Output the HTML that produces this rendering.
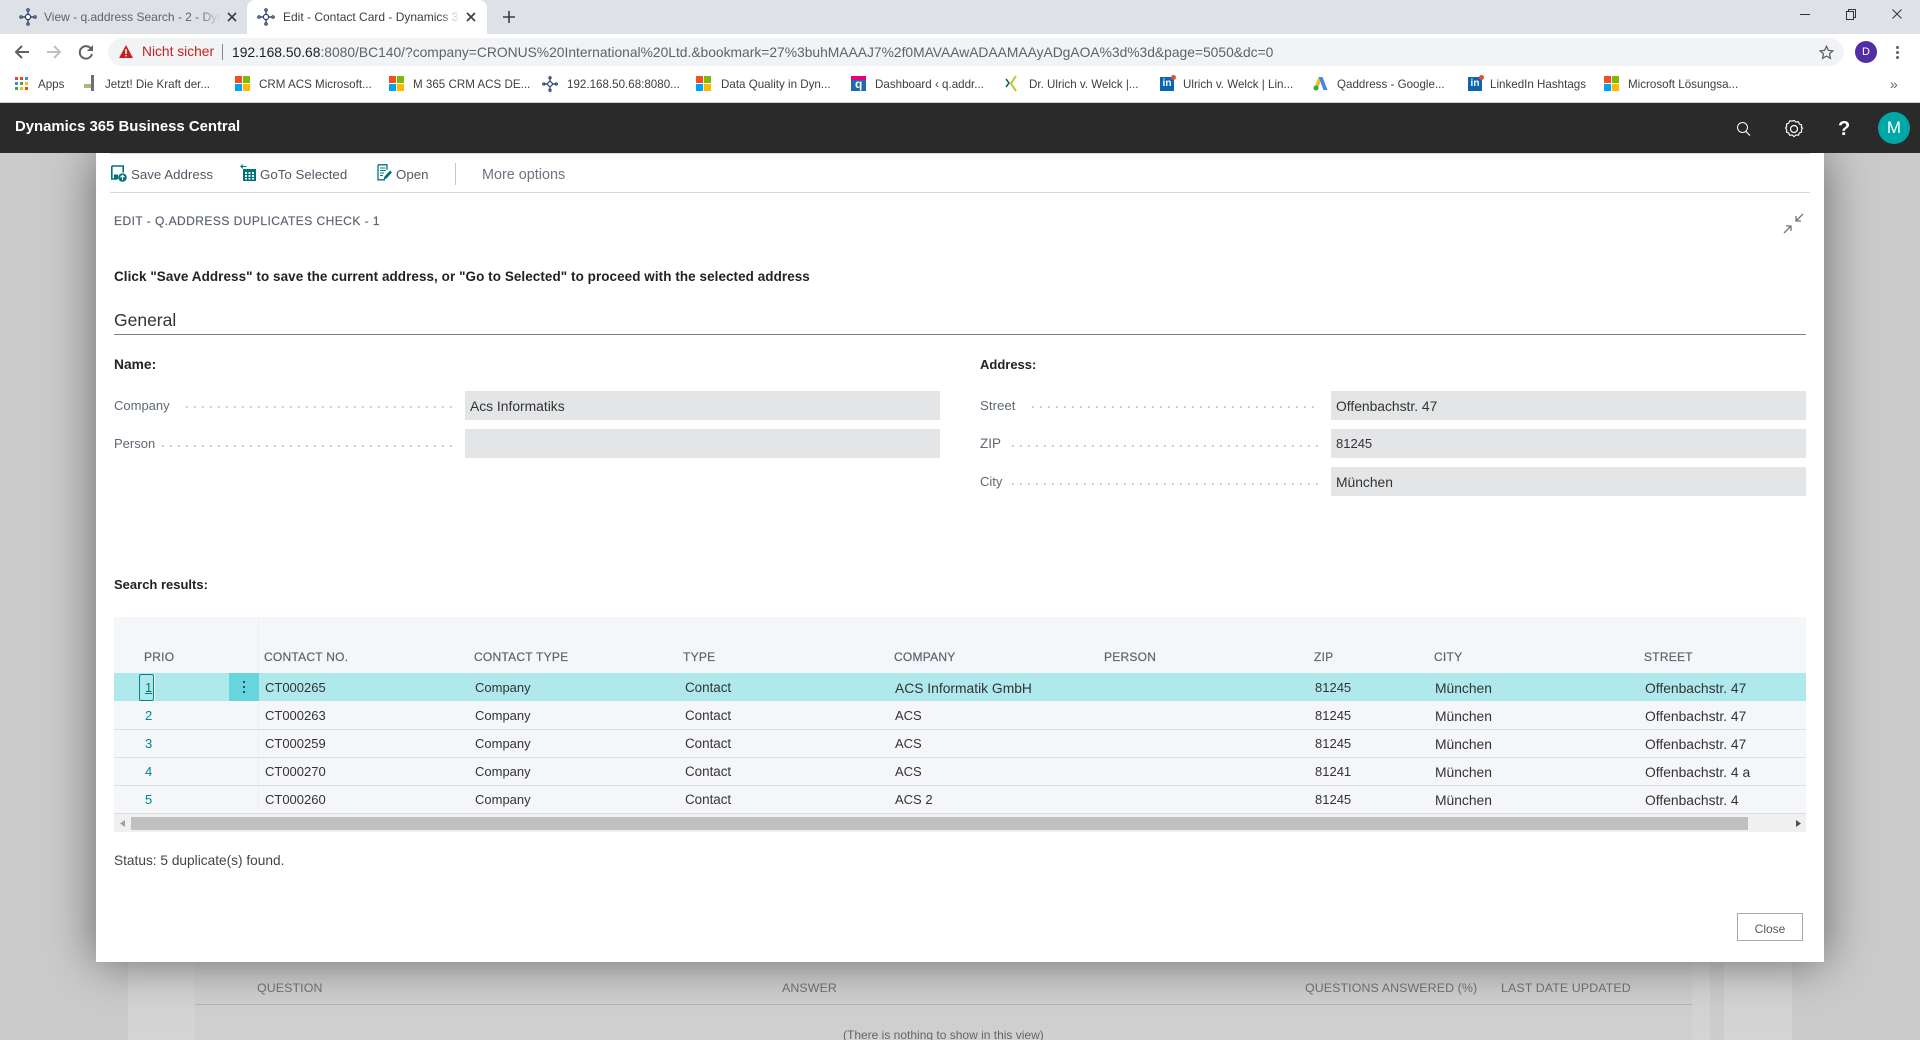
<!DOCTYPE html>
<html lang="de"><head><meta charset="utf-8"><title>Edit - Contact Card - Dynamics 365 Business Central</title>
<style>
*{box-sizing:border-box}
html,body{margin:0;padding:0;width:1920px;height:1040px;overflow:hidden;background:#fff}
body{position:relative;font-family:"Liberation Sans",sans-serif;color:#333}
.a{position:absolute}
.t{position:absolute;white-space:nowrap;line-height:20px;height:20px}
.s{font-size:13px;color:#333}
.w{font-size:13.85px}
.c{font-size:13.4px}
.h{font-size:12px;color:#5c6470;letter-spacing:.25px;-webkit-text-stroke:.2px #5c6470}
.bg{font-size:12.4px;color:#6f747b;letter-spacing:.1px;-webkit-text-stroke:0}
.bm{font-size:11.6px;color:#3c4043;top:75px}
.lb{font-size:13px;color:#5f6873}
.num{font-size:13px;color:#00858c}
.fld{position:absolute;background:#e4e5e7}
.dots{position:absolute;height:2px;background-image:linear-gradient(90deg,#bfc4ca 1.4px,transparent 1.4px);background-size:8px 2px}
svg{position:absolute;overflow:visible}
</style></head><body>

<!-- Chrome: tab strip -->
<div class="a" style="left:0;top:0;width:1920px;height:34px;background:#dee1e6"></div>
<div class="a" style="left:247px;top:0;width:240px;height:34px;background:#fff;border-radius:8px 8px 0 0"></div>
<svg style="left:19px;top:8px" width="18" height="18" viewBox="0 0 18 18"><g fill="none" stroke="#1f3864" stroke-width="1.2"><path d="M9 1v16M1 9h16"/><circle cx="9" cy="9" r="2.6" fill="#fff"/><circle cx="9" cy="2" r="1.2" fill="#fff"/><circle cx="9" cy="16" r="1.2" fill="#fff"/><circle cx="2" cy="9" r="1.2" fill="#fff"/><circle cx="16" cy="9" r="1.2" fill="#fff"/></g></svg>
<div class="t" style="left:44px;top:7px;font-size:12px;color:#5f6368;width:176px;overflow:hidden">View - q.address Search - 2 - Dyn</div>
<div class="a" style="left:200px;top:6px;width:20px;height:22px;background:linear-gradient(90deg,rgba(222,225,230,0),#dee1e6)"></div>
<svg style="left:227px;top:12px" width="10" height="10" viewBox="0 0 10 10"><path d="M1 1l8 8M9 1l-8 8" stroke="#3c4043" stroke-width="1.7"/></svg>
<svg style="left:257px;top:8px" width="18" height="18" viewBox="0 0 18 18"><g fill="none" stroke="#1f3864" stroke-width="1.2"><path d="M9 1v16M1 9h16"/><circle cx="9" cy="9" r="2.6" fill="#fff"/><circle cx="9" cy="2" r="1.2" fill="#fff"/><circle cx="9" cy="16" r="1.2" fill="#fff"/><circle cx="2" cy="9" r="1.2" fill="#fff"/><circle cx="16" cy="9" r="1.2" fill="#fff"/></g></svg>
<div class="t" style="left:283px;top:7px;font-size:12px;color:#3c4043;width:175px;overflow:hidden">Edit - Contact Card - Dynamics 365</div>
<div class="a" style="left:440px;top:6px;width:20px;height:22px;background:linear-gradient(90deg,rgba(255,255,255,0),#fff)"></div>
<svg style="left:466px;top:12px" width="10" height="10" viewBox="0 0 10 10"><path d="M1 1l8 8M9 1l-8 8" stroke="#3c4043" stroke-width="1.7"/></svg>
<svg style="left:503px;top:11px" width="12" height="12" viewBox="0 0 12 12"><path d="M6 0v12M0 6h12" stroke="#3c4043" stroke-width="1.6"/></svg>
<!-- window controls -->
<div class="a" style="left:1800px;top:14px;width:10px;height:1px;background:#333"></div>
<svg style="left:1846px;top:9px" width="10" height="11" viewBox="0 0 10 11"><path d="M.5 2.5h7v8h-7zM2.5 2.5v-2h7v8h-2" fill="none" stroke="#333"/></svg>
<svg style="left:1892px;top:9px" width="10" height="10" viewBox="0 0 10 10"><path d="M.5.5l9 9M9.5.5l-9 9" stroke="#333"/></svg>

<!-- Chrome: toolbar -->
<div class="a" style="left:0;top:34px;width:1920px;height:68px;background:#fff"></div>
<svg style="left:14px;top:44px" width="16" height="16" viewBox="0 0 16 16"><path d="M15 8H2M8 2L2 8l6 6" fill="none" stroke="#5f6368" stroke-width="2"/></svg>
<svg style="left:46px;top:44px" width="16" height="16" viewBox="0 0 16 16"><path d="M1 8h13M8 2l6 6-6 6" fill="none" stroke="#bdc1c6" stroke-width="2"/></svg>
<svg style="left:78px;top:44px" width="16" height="16" viewBox="0 0 16 16"><path d="M13.5 5.5A6.2 6.2 0 1 0 14 10" fill="none" stroke="#5f6368" stroke-width="2"/><path d="M15 1v6H9z" fill="#5f6368"/></svg>
<div class="a" style="left:108px;top:38px;width:1736px;height:28px;background:#f1f3f4;border-radius:14px"></div>
<svg style="left:119px;top:45px" width="14" height="13" viewBox="0 0 14 13"><path d="M7 0l7 13H0z" fill="#c5221f"/><path d="M6.3 4h1.4v5H6.3zM6.3 10h1.4v1.4H6.3z" fill="#fff"/></svg>
<div class="t" style="left:142px;top:42px;font-size:13.8px;color:#c5221f">Nicht sicher</div>
<div class="a" style="left:222px;top:44px;width:1px;height:16px;background:#80868b"></div>
<div class="t" style="left:232px;top:42px;font-size:13.83px;color:#5f6368"><span style="color:#202124">192.168.50.68</span>:8080/BC140/?company=CRONUS%20International%20Ltd.&amp;bookmark=27%3buhMAAAJ7%2f0MAVAAwADAAMAAyADgAOA%3d%3d&amp;page=5050&amp;dc=0</div>
<svg style="left:1819px;top:45px" width="15" height="15" viewBox="0 0 15 15"><path d="M7.5 1.3l1.9 4.1 4.4.5-3.3 3 .9 4.4-3.9-2.2-3.9 2.2.9-4.4-3.300-3 4.400-.5z" fill="none" stroke="#5f6368" stroke-width="1.3"/></svg>
<div class="a" style="left:1855px;top:41px;width:22px;height:22px;border-radius:50%;background:#512da8;color:#fff;font-size:11px;line-height:22px;text-align:center">D</div>
<div class="a" style="left:1896px;top:46px;width:3px;height:3px;border-radius:50%;background:#5f6368;box-shadow:0 5px 0 #5f6368,0 10px 0 #5f6368"></div>

<!-- Bookmarks -->
<svg style="left:15px;top:77px" width="14" height="14" viewBox="0 0 14 14"><g><rect width="3" height="3" fill="#ea4335"/><rect x="5" width="3" height="3" fill="#ea4335"/><rect x="10" width="3" height="3" fill="#4285f4"/><rect y="5" width="3" height="3" fill="#4285f4"/><rect x="5" y="5" width="3" height="3" fill="#34a853"/><rect x="10" y="5" width="3" height="3" fill="#fbbc05"/><rect y="10" width="3" height="3" fill="#34a853"/><rect x="5" y="10" width="3" height="3" fill="#fbbc05"/><rect x="10" y="10" width="3" height="3" fill="#ea4335"/></g></svg>
<div class="t bm" style="left:38px">Apps</div>
<svg style="left:83px;top:75px" width="12" height="16" viewBox="0 0 12 16"><path d="M8 0h3v16H8z" fill="#6b6f78"/><path d="M1 9h7v4H1z" fill="#b5b27a"/></svg>
<div class="t bm" style="left:105px">Jetzt! Die Kraft der...</div>
<svg style="left:235px;top:76px" width="15" height="15" viewBox="0 0 15 15"><path d="M0 0h7v7H0z" fill="#f25022"/><path d="M8 0h7v7H8z" fill="#7fba00"/><path d="M0 8h7v7H0z" fill="#00a4ef"/><path d="M8 8h7v7H8z" fill="#ffb900"/></svg>
<div class="t bm" style="left:259px">CRM ACS Microsoft...</div>
<svg style="left:389px;top:76px" width="15" height="15" viewBox="0 0 15 15"><path d="M0 0h7v7H0z" fill="#f25022"/><path d="M8 0h7v7H8z" fill="#7fba00"/><path d="M0 8h7v7H0z" fill="#00a4ef"/><path d="M8 8h7v7H8z" fill="#ffb900"/></svg>
<div class="t bm" style="left:413px">M 365 CRM ACS DE...</div>
<svg style="left:542px;top:76px" width="16" height="16" viewBox="0 0 18 18"><g fill="none" stroke="#1f3864" stroke-width="1.3"><path d="M9 1v16M1 9h16"/><circle cx="9" cy="9" r="2.6" fill="#fff"/><circle cx="9" cy="2" r="1.2" fill="#fff"/><circle cx="9" cy="16" r="1.2" fill="#fff"/><circle cx="2" cy="9" r="1.2" fill="#fff"/><circle cx="16" cy="9" r="1.2" fill="#fff"/></g></svg>
<div class="t bm" style="left:567px">192.168.50.68:8080...</div>
<svg style="left:696px;top:76px" width="15" height="15" viewBox="0 0 15 15"><path d="M0 0h7v7H0z" fill="#f25022"/><path d="M8 0h7v7H8z" fill="#7fba00"/><path d="M0 8h7v7H0z" fill="#00a4ef"/><path d="M8 8h7v7H8z" fill="#ffb900"/></svg>
<div class="t bm" style="left:721px">Data Quality in Dyn...</div>
<div class="a" style="left:851px;top:76px;width:15px;height:15px;background:#1f6bb0"></div><div class="a" style="left:851px;top:76px;width:15px;height:4px;background:#e6007e"></div><div class="t" style="left:855px;top:74px;font-size:12px;font-weight:bold;color:#fff">q</div>
<div class="t bm" style="left:875px">Dashboard ‹ q.addr...</div>
<svg style="left:1005px;top:76px" width="12" height="15" viewBox="0 0 12 15"><path d="M1 3l3 4-3 4" fill="none" stroke="#0a5f5f" stroke-width="1.5"/><path d="M11 0L6 7.500l5 7.500" fill="none" stroke="#b7c92b" stroke-width="2"/></svg>
<div class="t bm" style="left:1029px">Dr. Ulrich v. Welck |...</div>
<div class="a" style="left:1160px;top:77px;width:14px;height:14px;background:#0a66b0;color:#fff;font:bold 10px/14px 'Liberation Sans',sans-serif;text-align:center">in</div><div class="a" style="left:1171px;top:75px;width:5px;height:5px;border-radius:50%;background:#e34d3c"></div>
<div class="t bm" style="left:1183px">Ulrich v. Welck | Lin...</div>
<svg style="left:1313px;top:76px" width="15" height="15" viewBox="0 0 15 15"><path d="M5.500 1h4l5 13h-4z" fill="#4285f4"/><path d="M5.500 1l-5 13h4l3-8z" fill="#fbbc05"/><circle cx="3" cy="12" r="2.500" fill="#34a853"/></svg>
<div class="t bm" style="left:1337px">Qaddress - Google...</div>
<div class="a" style="left:1468px;top:77px;width:14px;height:14px;background:#0a66b0;color:#fff;font:bold 10px/14px 'Liberation Sans',sans-serif;text-align:center">in</div><div class="a" style="left:1479px;top:75px;width:5px;height:5px;border-radius:50%;background:#e34d3c"></div>
<div class="t bm" style="left:1490px">LinkedIn Hashtags</div>
<svg style="left:1604px;top:76px" width="15" height="15" viewBox="0 0 15 15"><path d="M0 0h7v7H0z" fill="#f25022"/><path d="M8 0h7v7H8z" fill="#7fba00"/><path d="M0 8h7v7H0z" fill="#00a4ef"/><path d="M8 8h7v7H8z" fill="#ffb900"/></svg>
<div class="t bm" style="left:1628px">Microsoft Lösungsa...</div>
<div class="t" style="left:1890px;top:74px;font-size:14px;color:#5f6368">»</div>
<div class="a" style="left:0;top:102px;width:1920px;height:1px;background:#d0d2d6"></div>

<!-- Background page (dimmed) -->
<div class="a" style="left:0;top:153px;width:1920px;height:887px;background:#cbcbcb"></div>
<div class="a" style="left:128px;top:153px;width:1564px;height:887px;background:#d4d4d4"></div>
<div class="a" style="left:195px;top:153px;width:1497px;height:887px;background:#d0d0d0"></div>
<div class="a" style="left:1692px;top:153px;width:18px;height:887px;background:#d4d4d4"></div>
<div class="a" style="left:1710px;top:153px;width:14px;height:887px;background:#cdcdcd"></div>
<div class="a" style="left:1724px;top:153px;width:68px;height:887px;background:#d4d4d4"></div>
<div class="a" style="left:195px;top:1004px;width:1497px;height:1px;background:#b6b6b6"></div>
<div class="t h bg" style="left:257px;top:978px">QUESTION</div>
<div class="t h bg" style="left:782px;top:978px">ANSWER</div>
<div class="t h bg" style="left:1305px;top:978px">QUESTIONS ANSWERED (%)</div>
<div class="t h bg" style="left:1501px;top:978px">LAST DATE UPDATED</div>
<div class="t" style="left:843px;top:1025px;font-size:12px;color:#666">(There is nothing to show in this view)</div>

<!-- Dialog -->
<div class="a" style="left:96px;top:153px;width:1728px;height:809px;background:#fff;box-shadow:0 0 45px rgba(0,0,0,.5)"></div>

<!-- BC header -->
<div class="a" style="left:0;top:103px;width:1920px;height:50px;background:#2a2a2a"></div>
<div class="t" style="left:15px;top:117px;font-size:14.9px;font-weight:bold;color:#fff">Dynamics 365 Business Central</div>
<svg style="left:1736px;top:121px" width="15" height="16" viewBox="0 0 15 16"><circle cx="6.500" cy="6.500" r="5" fill="none" stroke="#fff" stroke-width="1"/><path d="M10 10.500l4 4" stroke="#fff" stroke-width="1.200"/></svg>
<svg style="left:1785px;top:120px" width="18" height="18" viewBox="0 0 18 18"><path d="M9 1l2 1.700 2.600-.3 1 2.400 2.400 1-.3 2.600L18 9l-1.300 1.600.3 2.600-2.400 1-1 2.400-2.600-.3L9 18l-2-1.700-2.600.3-1-2.400-2.400-1 .3-2.600L0 9l1.300-1.600L1 4.800l2.400-1 1-2.400 2.600.3z" fill="none" stroke="#fff" stroke-width="1.200" transform="translate(.5 -.5) scale(.95)"/><circle cx="9" cy="9" r="3.500" fill="none" stroke="#fff" stroke-width="1.200"/></svg>
<div class="t" style="left:1838px;top:118px;font-size:20px;font-weight:bold;color:#fff;line-height:22px;height:22px">?</div>
<div class="a" style="left:1878px;top:112px;width:32px;height:32px;border-radius:50%;background:#00a7a7;color:#fff;font-size:17px;line-height:32px;text-align:center">M</div>

<div class="a" style="left:110px;top:153px;width:1700px;height:1px;background:#d5d8dc"></div>
<div class="a" style="left:110px;top:192px;width:1700px;height:1px;background:#d5d8dc"></div>
<!-- toolbar icons -->
<svg style="left:111px;top:165px" width="16" height="17" viewBox="0 0 16 17"><path d="M.8 1h11.400v6.500M.8 1v13h5.500" fill="none" stroke="#00727a" stroke-width="1.600"/><path d="M3 9.500h4v4.500H3z" fill="#00727a"/><circle cx="11.500" cy="12.500" r="4.300" fill="#00727a"/><path d="M11.500 15v-4.500M9.500 12.300l2-2 2 2" fill="none" stroke="#fff" stroke-width="1.100"/></svg>
<div class="t s" style="left:131px;top:165px;color:#505a65;font-size:13.3px">Save Address</div>
<svg style="left:240px;top:164px" width="16" height="17" viewBox="0 0 16 17"><path d="M3 5h13v12H3z" fill="#00727a"/><path d="M5 8h2v2H5zM8.500 8h2v2h-2zM12 8h2v2h-2zM5 11h2v2H5zM8.500 11h2v2h-2zM12 11h2v2h-2zM5 14h2v1.500H5zM8.500 14h2v1.500h-2zM12 14h2v1.500h-2z" fill="#fff"/><path d="M1 2.500h5.500M2.800 .6L.9 2.500l1.900 1.900" fill="none" stroke="#00727a" stroke-width="1.100"/></svg>
<div class="t s" style="left:260px;top:165px;color:#505a65;font-size:13.3px">GoTo Selected</div>
<svg style="left:377px;top:164px" width="15" height="17" viewBox="0 0 15 17"><path d="M1 .8h9v5M1 .8v15h7" fill="none" stroke="#00727a" stroke-width="1.300"/><path d="M3 4h5.500M3 6.500h5.500M3 9h4M3 11.500h3" stroke="#00727a"/><path d="M6.500 15.500l1-3 5.500-6 2 2-5.500 6z" fill="#00727a"/></svg>
<div class="t s" style="left:396px;top:165px;color:#505a65;font-size:13.3px">Open</div>
<div class="a" style="left:455px;top:163px;width:1px;height:22px;background:#c3c6ca"></div>
<div class="t s" style="left:482px;top:165px;color:#6c7480;font-size:14.4px">More options</div>

<div class="t h" style="left:114px;top:211px;font-size:12px;letter-spacing:.46px">EDIT - Q.ADDRESS DUPLICATES CHECK - 1</div>
<svg style="left:1783px;top:213px" width="21" height="21" viewBox="0 0 21 21"><path d="M20 1l-7 7M13 3v5h5M1 20l7-7M8 18v-5H3" fill="none" stroke="#6c7480" stroke-width="1.300"/></svg>
<div class="t" style="left:114px;top:267px;font-size:13.45px;font-weight:bold;color:#222;letter-spacing:.08px">Click "Save Address" to save the current address, or "Go to Selected" to proceed with the selected address</div>
<div class="t" style="left:114px;top:310px;font-size:17.5px;color:#333">General</div>
<div class="a" style="left:114px;top:334px;width:1692px;height:1px;background:#7a8088"></div>

<div class="t" style="left:114px;top:355px;font-size:13.8px;font-weight:bold;color:#222">Name:</div>
<div class="t" style="left:980px;top:355px;font-size:13px;font-weight:bold;color:#222">Address:</div>

<div class="t lb w" style="left:114px;top:396px">Company</div>
<div class="dots" style="left:186px;top:406px;width:268px"></div>
<div class="fld" style="left:465px;top:391px;width:475px;height:29px"></div>
<div class="t s w" style="left:470px;top:396px">Acs Informatiks</div>
<div class="t lb" style="left:114px;top:434px">Person</div>
<div class="dots" style="left:162px;top:445px;width:292px"></div>
<div class="fld" style="left:465px;top:429px;width:475px;height:29px"></div>

<div class="t lb" style="left:980px;top:396px;font-size:13.3px">Street</div>
<div class="dots" style="left:1032px;top:406px;width:288px"></div>
<div class="fld" style="left:1331px;top:391px;width:475px;height:29px"></div>
<div class="t s w" style="left:1336px;top:396px">Offenbachstr. 47</div>
<div class="t lb" style="left:980px;top:434px;font-size:13.5px">ZIP</div>
<div class="dots" style="left:1012px;top:445px;width:308px"></div>
<div class="fld" style="left:1331px;top:429px;width:475px;height:29px"></div>
<div class="t s" style="left:1336px;top:434px">81245</div>
<div class="t lb" style="left:980px;top:472px">City</div>
<div class="dots" style="left:1012px;top:483px;width:308px"></div>
<div class="fld" style="left:1331px;top:467px;width:475px;height:29px"></div>
<div class="t s w" style="left:1336px;top:472px">München</div>

<div class="t" style="left:114px;top:575px;font-size:13px;font-weight:bold;color:#222">Search results:</div>

<!-- Table -->
<div class="a" style="left:114px;top:617px;width:1692px;height:215px;background:#f5f6f9"></div>
<div class="a" style="left:258px;top:617px;width:1px;height:196px;background:#eff0f3"></div>
<div class="t h" style="left:144px;top:647px">PRIO</div>
<div class="t h" style="left:264px;top:647px">CONTACT NO.</div>
<div class="t h" style="left:474px;top:647px">CONTACT TYPE</div>
<div class="t h" style="left:683px;top:647px">TYPE</div>
<div class="t h" style="left:894px;top:647px">COMPANY</div>
<div class="t h" style="left:1104px;top:647px">PERSON</div>
<div class="t h" style="left:1314px;top:647px">ZIP</div>
<div class="t h" style="left:1434px;top:647px">CITY</div>
<div class="t h" style="left:1644px;top:647px">STREET</div>

<div class="a" style="left:114px;top:673px;width:1692px;height:28px;background:#b0e9ec"></div>
<div class="a" style="left:229px;top:673px;width:30px;height:28px;background:#66d5dd"></div>
<div class="a" style="left:243px;top:681px;width:2px;height:2px;background:#2b4f55;box-shadow:0 5px 0 #2b4f55,0 10px 0 #2b4f55"></div>
<div class="a" style="left:139px;top:674px;width:15px;height:27px;border:1.500px solid #00858c;border-radius:2px;box-shadow:1px 0 0 #fff"></div>
<div class="t num" style="left:145px;top:678px;text-decoration:underline;color:#00757c">1</div>
<div class="t s" style="left:265px;top:678px">CT000265</div><div class="t s" style="left:475px;top:678px">Company</div><div class="t s c" style="left:685px;top:678px">Contact</div><div class="t s w" style="left:895px;top:678px">ACS Informatik GmbH</div><div class="t s" style="left:1315px;top:678px">81245</div><div class="t s w" style="left:1435px;top:678px">München</div><div class="t s w" style="left:1645px;top:678px">Offenbachstr. 47</div>

<div class="a" style="left:114px;top:729px;width:1692px;height:1px;background:#dcdee2"></div>
<div class="t num" style="left:145px;top:706px">2</div>
<div class="t s" style="left:265px;top:706px">CT000263</div><div class="t s" style="left:475px;top:706px">Company</div><div class="t s c" style="left:685px;top:706px">Contact</div><div class="t s" style="left:895px;top:706px">ACS</div><div class="t s" style="left:1315px;top:706px">81245</div><div class="t s w" style="left:1435px;top:706px">München</div><div class="t s w" style="left:1645px;top:706px">Offenbachstr. 47</div>

<div class="a" style="left:114px;top:757px;width:1692px;height:1px;background:#dcdee2"></div>
<div class="t num" style="left:145px;top:734px">3</div>
<div class="t s" style="left:265px;top:734px">CT000259</div><div class="t s" style="left:475px;top:734px">Company</div><div class="t s c" style="left:685px;top:734px">Contact</div><div class="t s" style="left:895px;top:734px">ACS</div><div class="t s" style="left:1315px;top:734px">81245</div><div class="t s w" style="left:1435px;top:734px">München</div><div class="t s w" style="left:1645px;top:734px">Offenbachstr. 47</div>

<div class="a" style="left:114px;top:785px;width:1692px;height:1px;background:#dcdee2"></div>
<div class="t num" style="left:145px;top:762px">4</div>
<div class="t s" style="left:265px;top:762px">CT000270</div><div class="t s" style="left:475px;top:762px">Company</div><div class="t s c" style="left:685px;top:762px">Contact</div><div class="t s" style="left:895px;top:762px">ACS</div><div class="t s" style="left:1315px;top:762px">81241</div><div class="t s w" style="left:1435px;top:762px">München</div><div class="t s w" style="left:1645px;top:762px">Offenbachstr. 4 a</div>

<div class="a" style="left:114px;top:813px;width:1692px;height:1px;background:#dcdee2"></div>
<div class="t num" style="left:145px;top:790px">5</div>
<div class="t s" style="left:265px;top:790px">CT000260</div><div class="t s" style="left:475px;top:790px">Company</div><div class="t s c" style="left:685px;top:790px">Contact</div><div class="t s" style="left:895px;top:790px">ACS 2</div><div class="t s" style="left:1315px;top:790px">81245</div><div class="t s w" style="left:1435px;top:790px">München</div><div class="t s w" style="left:1645px;top:790px">Offenbachstr. 4</div>

<!-- scrollbar -->
<div class="a" style="left:114px;top:814px;width:1692px;height:18px;background:#f0f0f0"></div>
<div class="a" style="left:131px;top:817px;width:1617px;height:13px;background:#c0c0c0"></div>
<svg style="left:120px;top:820px" width="5" height="7" viewBox="0 0 5 7"><path d="M5 0v7L0 3.500z" fill="#a0a0a0"/></svg>
<svg style="left:1796px;top:820px" width="5" height="7" viewBox="0 0 5 7"><path d="M0 0v7l5-3.500z" fill="#505050"/></svg>

<div class="t lb" style="left:114px;top:851px;color:#444;font-size:13.7px">Status: 5 duplicate(s) found.</div>
<div class="a" style="left:1737px;top:913px;width:66px;height:28px;border:1px solid #a8a8a8;background:#fff;color:#505a65;font-size:12px;line-height:30px;text-align:center">Close</div>
</body></html>
